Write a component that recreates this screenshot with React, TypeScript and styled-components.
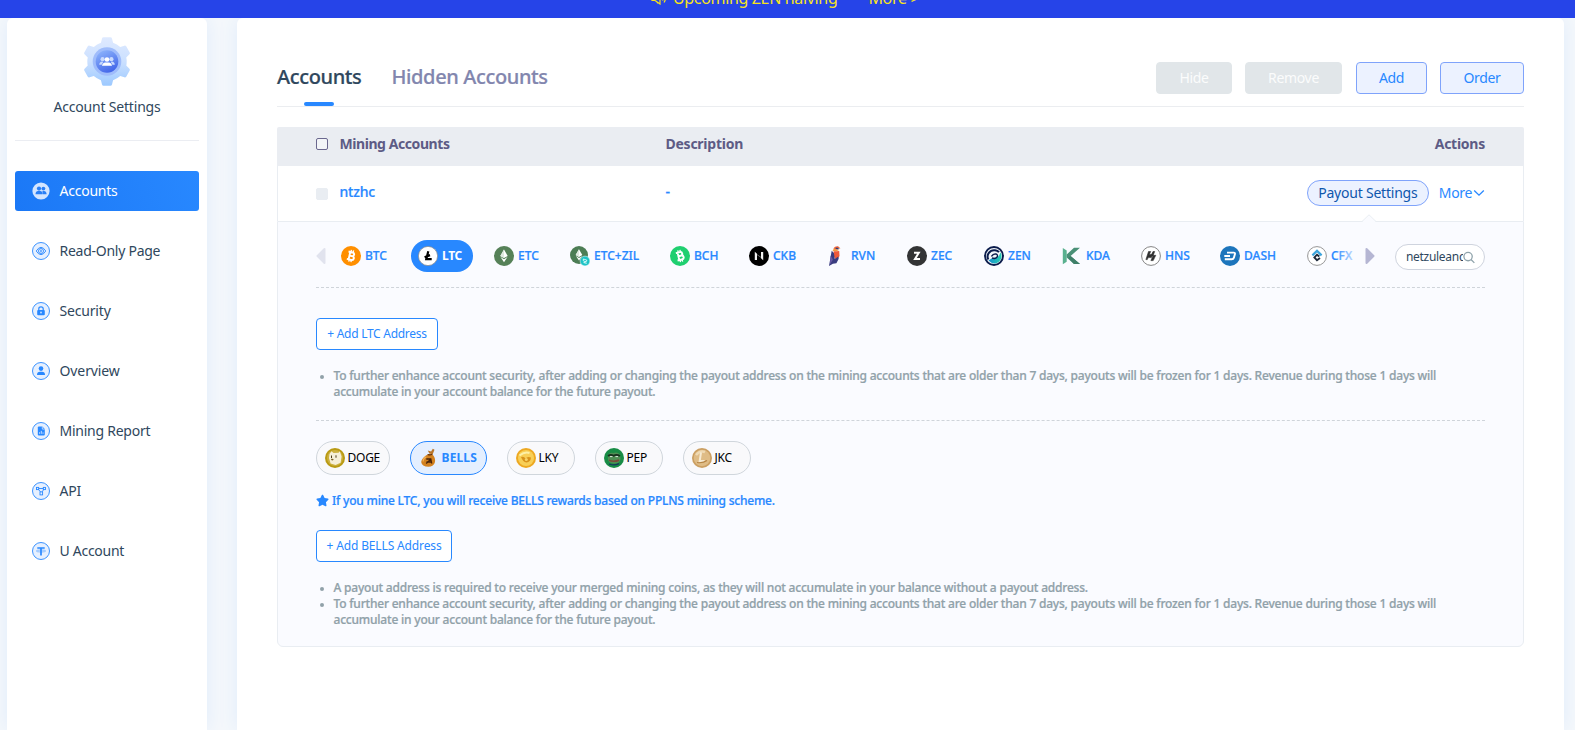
import React from "react";
import styled, { createGlobalStyle, css } from "styled-components";
import { FaStar } from "react-icons/fa";

const blue = "#2888ff";

const GlobalStyle = createGlobalStyle`
  * { box-sizing: border-box; }
  html, body { margin: 0; padding: 0; }
  body {
    font-family: "Noto Sans", "Open Sans", sans-serif;
    font-size: 14px;
    color: #2f475d;
    background: #f5f8fb;
    overflow: hidden;
  }
  button, input { font-family: inherit; }
`;

const mediumText = css`
  font-weight: 500;
  -webkit-text-stroke: 0.22px currentColor;
`;

const Page = styled.div`
  height: 730px;
  display: flex;
  flex-direction: column;
  overflow: hidden;
`;

const Banner = styled.div`
  flex: none;
  height: 18px;
  background: #2644e8;
  overflow: hidden;
  position: relative;
  z-index: 1;
`;

const BannerInner = styled.div`
  height: 40px;
  margin-top: -22px;
  padding-left: 651px;
  display: flex;
  align-items: center;
  color: #f6e31c;
  font-size: 16px;
  white-space: nowrap;
  letter-spacing: -0.34px;
  svg { margin-right: 7px; }
`;

const BannerMore = styled.span`
  margin-left: 31px;
`;

const Body = styled.div`
  flex: 1;
  display: flex;
  align-items: stretch;
  gap: 30px;
  padding: 0 11px 0 7px;
`;

const cardStyle = css`
  background: #fff;
  border-radius: 6px 6px 0 0;
  box-shadow: 0 0 20px rgba(40, 128, 255, 0.1);
`;

const Sidebar = styled.aside`
  ${cardStyle}
  width: 200px;
  flex: none;
  padding: 0 8px;
`;

const Profile = styled.div`
  height: 123px;
  border-bottom: 1px solid #ebedf2;
  padding-top: 19px;
  display: flex;
  flex-direction: column;
  align-items: center;
`;

const ProfileName = styled.div`
  margin-top: 11px;
  line-height: 20px;
  letter-spacing: -0.19px;
`;

const Nav = styled.nav`
  margin-top: 30px;
  display: flex;
  flex-direction: column;
  gap: 20px;
`;

const NavItem = styled.a<{ $active?: boolean; $ls: number }>`
  height: 40px;
  border-radius: 3px;
  padding-left: 17px;
  display: flex;
  align-items: center;
  gap: 9.5px;
  letter-spacing: ${(p) => p.$ls}px;
  color: ${(p) => (p.$active ? "#fff" : "#2f475d")};
  background: ${(p) => (p.$active ? "linear-gradient(70deg, #1b78f6, #2888ff)" : "transparent")};
  svg { flex: none; }
`;

const Label = styled.span`
  margin-top: -2px;
`;

const Main = styled.main`
  ${cardStyle}
  flex: 1;
  padding: 0 40px;
`;

const Toolbar = styled.div`
  height: 89px;
  border-bottom: 1px solid #ebedf0;
  display: flex;
  justify-content: space-between;
`;

const Tabs = styled.div`
  display: flex;
  gap: 30px;
`;

const Tab = styled.div<{ $active?: boolean }>`
  ${mediumText}
  height: 88px;
  padding-top: 44px;
  line-height: 30px;
  font-size: 20px;
  letter-spacing: -0.37px;
  color: ${(p) => (p.$active ? "#2f475d" : "#8286ae")};
  display: flex;
  flex-direction: column;
  align-items: center;
  justify-content: space-between;
  &::after {
    content: "";
    width: 30px;
    height: 4px;
    border-radius: 2px;
    background: ${(p) => (p.$active ? blue : "transparent")};
  }
`;

const Buttons = styled.div`
  display: flex;
  gap: 13px;
  padding-top: 44px;
`;

const ActionButton = styled.button<{ $w: number; $disabled?: boolean }>`
  width: ${(p) => p.$w}px;
  height: 32px;
  padding: 0 0 2px;
  border-radius: 4px;
  font-size: 14px;
  letter-spacing: -0.32px;
  border: 1px solid ${(p) => (p.$disabled ? "#e1e6e9" : "#7fa3fb")};
  background: ${(p) => (p.$disabled ? "#e1e6e9" : "#ecf2ff")};
  color: ${(p) => (p.$disabled ? "#fbfcfc" : blue)};
`;

const Spacer = styled.span`
  width: 1px;
  margin-right: -13px;
`;

const Table = styled.section`
  margin-top: 20px;
`;

const HeadRow = styled.div`
  height: 39px;
  padding: 0 39px 5px;
  display: flex;
  align-items: center;
  background: #eaedf2;
  color: #5d5b85;
  font-weight: 700;
  border-radius: 2px 2px 0 0;
`;

const CheckBox = styled.span<{ $disabled?: boolean }>`
  width: 12px;
  height: 12px;
  margin: ${(p) => (p.$disabled ? 4 : 0)}px 11.5px 0 0;
  border-radius: 2px;
  border: 1px solid ${(p) => (p.$disabled ? "#e9edf2" : "#6b688f")};
  background: ${(p) => (p.$disabled ? "#e9edf2" : "#f3f5f8")};
`;

const Cell = styled.span<{ $w?: number; $ls?: number }>`
  ${(p) => (p.$w ? `width: ${p.$w}px;` : "margin-left: auto;")}
  margin-top: -2px;
  letter-spacing: ${(p) => p.$ls ?? -0.25}px;
`;

const AccountRow = styled.div`
  ${mediumText}
  height: 55px;
  padding: 0 38px 3px;
  display: flex;
  align-items: center;
  border: 1px solid #e9edf2;
  border-width: 0 1px;
  color: ${blue};
`;

const RowActions = styled.div`
  margin: 2px 0 0 auto;
  display: flex;
  align-items: center;
  font-weight: 400;
  -webkit-text-stroke: 0;
`;

const PayoutPill = styled.button`
  width: 122px;
  height: 26px;
  padding: 0 0 2px;
  margin-right: 10px;
  border: 1px solid #7fa3fb;
  border-radius: 13px;
  background: #ecf2ff;
  color: #0f57ad;
  font-size: 14px;
  letter-spacing: -0.22px;
`;

const MoreLink = styled.span`
  display: flex;
  align-items: center;
  gap: 1px;
  letter-spacing: -0.35px;
`;

const Panel = styled.div`
  position: relative;
  background: #fafbff;
  border: 1px solid #e9edf2;
  border-radius: 0 0 6px 6px;
  padding: 18px 38px 18px;
`;

const Caret = styled.svg`
  position: absolute;
  top: -8px;
  right: 147px;
`;

const Carousel = styled.div`
  height: 48px;
  padding-bottom: 15px;
  border-bottom: 1px dashed #cfd4da;
  display: flex;
  align-items: center;
`;

const CoinTrack = styled.div`
  position: relative;
  width: 1021px;
  margin: 0 10px 0 8px;
  display: flex;
  gap: 14px;
  overflow: hidden;
  &::after {
    content: "";
    position: absolute;
    inset: 0 0 0 auto;
    width: 20px;
    background: linear-gradient(90deg, rgba(250, 251, 255, 0), rgba(250, 251, 255, 0.75));
  }
`;

const Coin = styled.div<{ $w: number; $active?: boolean }>`
  ${mediumText}
  flex: none;
  width: ${(p) => p.$w}px;
  height: 32px;
  padding-left: 7px;
  border-radius: 16px;
  display: flex;
  align-items: center;
  gap: 4px;
  font-size: 12px;
  letter-spacing: 0;
  color: ${(p) => (p.$active ? "#fff" : blue)};
  background: ${(p) => (p.$active ? blue : "transparent")};
  svg { flex: none; }
  ${(p) => p.$active && "font-weight: 700; letter-spacing: -0.3px; -webkit-text-stroke: 0;"}
`;

const SearchBox = styled.label`
  width: 90px;
  height: 26px;
  margin: 2px 0 0 auto;
  padding: 0 9px 0 10px;
  border: 1px solid #cfd4de;
  border-radius: 13px;
  background: #fff;
  display: flex;
  align-items: center;
`;

const SearchInput = styled.input`
  width: 57px;
  flex: none;
  padding: 0;
  margin-top: -1px;
  border: 0;
  outline: 0;
  background: transparent;
  font-size: 12px;
  letter-spacing: -0.3px;
  color: #2f475d;
`;

const AddButton = styled.button<{ $w: number; $top: number; $ls: number }>`
  display: block;
  width: ${(p) => p.$w}px;
  height: 32px;
  margin-top: ${(p) => p.$top}px;
  padding: 0 0 2px;
  border: 1px solid ${blue};
  border-radius: 4px;
  background: #fff;
  color: ${blue};
  font-size: 12px;
  letter-spacing: ${(p) => p.$ls}px;
`;

const Notes = styled.ul`
  ${mediumText}
  margin: 18px 0 0;
  padding: 0 0 0 17.5px;
  list-style: none;
  font-size: 12px;
  line-height: 16px;
  letter-spacing: -0.207px;
  color: #90a1a9;
  li { position: relative; }
  li::before {
    content: "";
    position: absolute;
    left: -13.500px;
    top: 7px;
    width: 4px;
    height: 4px;
    border-radius: 50%;
    background: #90a1a9;
  }
`;

const MergedCoins = styled.div`
  margin-top: 20px;
  padding-top: 20px;
  border-top: 1px dashed #cfd4da;
  display: flex;
  gap: 20px;
`;

const MergedCoin = styled.div<{ $w: number; $active?: boolean }>`
  width: ${(p) => p.$w}px;
  height: 34px;
  padding-left: 8px;
  display: flex;
  align-items: center;
  gap: 2.5px;
  border-radius: 17px;
  border: 1px solid ${(p) => (p.$active ? blue : "#d0d6dc")};
  background: ${(p) => (p.$active ? "#e4efff" : "#f9f9fb")};
  color: ${(p) => (p.$active ? blue : "#000")};
  font-size: 12px;
  font-weight: ${(p) => (p.$active ? 700 : 400)};
  letter-spacing: ${(p) => (p.$active ? 0.15 : -0.25)}px;
`;

const Hint = styled.div`
  ${mediumText}
  margin-top: 17px;
  height: 17px;
  display: flex;
  align-items: center;
  gap: 3px;
  font-size: 12px;
  letter-spacing: -0.207px;
  color: ${blue};
`;

const GearLogo = () => (
  <svg width="48" height="49" viewBox="-24 -24.5 48 49">
    <defs>
      <linearGradient id="gear" x1="0" y1="0" x2="0" y2="1">
        <stop offset="0" stopColor="#dfeaff" />
        <stop offset=".5" stopColor="#cbe0ff" />
        <stop offset="1" stopColor="#9cc9ff" />
      </linearGradient>
      <linearGradient id="core" x1=".2" y1="0" x2=".7" y2="1">
        <stop offset="0" stopColor="#8db4fc" />
        <stop offset="1" stopColor="#4063e8" />
      </linearGradient>
      <clipPath id="gearShape">
        <circle r="19.7" />
        {[0, 60, 120].map((a) => (
          <path key={a} transform={`rotate(${a})`} d="M-5 -23q.4-1.200 1.500-1.200h7q1.100 0 1.500 1.200l2 8v30l-2 8q-.4 1.200-1.500 1.200h-7q-1.100 0-1.500-1.200l-2-8v-30z" />
        ))}
      </clipPath>
    </defs>
    <rect x="-24" y="-24.5" width="48" height="49" fill="url(#gear)" clipPath="url(#gearShape)" />
    <circle r="14.3" fill="#9fbcfb" />
    <circle r="11.3" fill="url(#core)" />
    <g fill="#c9dafe">
      <circle cx="-4.4" cy="-2.3" r="2.1" />
      <circle cx="4.4" cy="-2.3" r="2.1" />
      <path d="M-7.800 3.300q.3-3 3-3.200l1 .3-1.600 2.900zM7.800 3.300q-.3-3-3-3.200l-1 .3 1.600 2.900z" />
    </g>
    <g fill="#fff">
      <circle cy="-2" r="2.3" />
      <path d="M-5 4.300q.4-3 3.400-3.300h3.200q3 .3 3.400 3.300z" />
    </g>
  </svg>
);

const navGlyphs: Record<string, React.ReactNode> = {
  eye: (
    <g fill="none" stroke={blue} strokeWidth=".9">
      <path d="M4.200 9q4.800-7.400 9.600 0q-4.800 7.400-9.600 0z" />
      <circle cx="9" cy="9" r="2.500" />
      <path d="M9 7.700v2.600" strokeWidth="1.200" />
    </g>
  ),
  lock: (
    <g>
      <path d="M6.800 8.500V6.800q0-2 2.200-2t2.200 2v1.700" fill="none" stroke={blue} strokeWidth="1.200" />
      <rect x="5.200" y="7.900" width="7.600" height="5.300" rx="1" fill={blue} />
      <circle cx="9" cy="10.500" r=".9" fill="#cfe3ff" />
    </g>
  ),
  user: (
    <g fill={blue}>
      <circle cx="9" cy="6.600" r="2.300" />
      <path d="M5 13q0-3.300 3-3.300h2q3 0 3 3.300z" />
    </g>
  ),
  report: (
    <g>
      <path d="M6.800 4.600h3.600l2.400 2.400v5.400q0 1-1 1H6.800q-1 0-1-1V5.600q0-1 1-1z" fill={blue} />
      <path d="M10.300 4.600v2.500h2.500" fill="none" stroke="#e6f0ff" strokeWidth=".7" />
      <path d="M7.600 11.800v-1.600M9.300 11.800V8.900M11 11.800v-1.400" stroke="#e6f0ff" strokeWidth=".8" />
    </g>
  ),
  api: (
    <g fill="none" stroke={blue} strokeWidth=".9">
      <rect x="4.500" y="5.400" width="2.200" height="2.200" />
      <rect x="11.300" y="5.400" width="2.200" height="2.200" />
      <rect x="8" y="9.900" width="2.600" height="3" />
      <path d="M6.700 6.500h4.600M6.500 7.600L8.600 9.900M11.700 7.600L10 9.900" />
    </g>
  ),
  tether: (
    <g stroke={blue} fill="none">
      <path d="M5.300 6h7.400M9 6v7.500" strokeWidth="1.700" />
      <ellipse cx="9" cy="9" rx="4.600" ry="1" strokeWidth=".5" />
    </g>
  ),
};

const NavIcon = ({ name }: { name: string }) =>
  name === "users" ? (
    <svg width="18" height="18" viewBox="0 0 18 18">
      <circle cx="9" cy="9" r="8.600" fill="#d3e5ff" />
      <g fill="#2a7ff5">
        <circle cx="7" cy="6.600" r="2.100" />
        <circle cx="11.400" cy="6.600" r="1.900" />
        <path d="M3.500 12.200q0-3 2.500-3.300h2.200q2.500.3 2.500 3.300zM11 12.200h3.600q0-3-2.600-3.300h-1.600z" />
      </g>
    </svg>
  ) : (
    <svg width="18" height="18" viewBox="0 0 18 18">
      <circle cx="9" cy="9" r="8.500" fill="#e6f0ff" stroke={blue} strokeWidth=".9" />
      {navGlyphs[name]}
    </svg>
  );

const Diamond = () => (
  <>
    <path d="M10 3.600l3.700 6.300L10 12.100 6.300 9.900z" fill="#fff" />
    <path d="M10 3.600v8.500L6.300 9.900z" fill="#dfe9df" />
    <path d="M6.500 11.100L10 13.200l3.500-2.100L10 16.200z" fill="#fff" />
  </>
);

const BitcoinMark = ({ tilt }: { tilt: number }) => (
  <g transform={`rotate(${tilt} 10 10)`} fill="none" stroke="#fff">
    <path d="M6.600 6.200h4.100q2 0 2 1.850t-2 1.850H8.500M8.500 9.900h2.600q2.200 0 2.200 1.950t-2.200 1.950H6.600M8.400 6.200v7.600" strokeWidth="1.900" />
    <path d="M9.100 4v2M11.300 4v2M9.100 14v2M11.300 14v2" strokeWidth="1.300" />
  </g>
);

const coinArt: Record<string, React.ReactNode> = {
  BTC: <><circle cx="10" cy="10" r="10" fill="#ff8f00" /><BitcoinMark tilt={13} /></>,
  LTC: (
    <>
      <circle cx="10" cy="10" r="9.600" fill="#fff" stroke="#8b8f96" strokeWidth=".8" />
      <path d="M10.300 5.200L8.300 13.200h5.400M6.600 11.200l5.400-2.100" fill="none" stroke="#000" strokeWidth="2.200" />
    </>
  ),
  ETC: <><circle cx="10" cy="10" r="10" fill="#568158" /><Diamond /></>,
  "ETC+ZIL": (
    <>
      <g transform="scale(.9)"><circle cx="10" cy="10" r="10" fill="#4c7d55" /><Diamond /></g>
      <circle cx="15" cy="15" r="4.900" fill="#1cc3c6" stroke="#fafbff" strokeWidth=".5" />
      <path d="M13.200 13l3.500 1v1.200l-3 1.400 3 .8M13.300 13v1.800l3 1.300" fill="none" stroke="#eaffff" strokeWidth=".8" />
    </>
  ),
  BCH: <><circle cx="10" cy="10" r="10" fill="#1fcf70" /><BitcoinMark tilt={-13} /></>,
  CKB: <><circle cx="10" cy="10" r="10" fill="#000" /><path d="M5.800 14V5.800l2.200 2V14zM12 6h2.200v8.200l-2.200-2z" fill="#f2f2f2" /><path d="M8 8.600l4 2.800" stroke="#666" /></>,
  RVN: (
    <>
      <path d="M6.300 2.600Q8 0 11 .3l2.400 2-4 1.400z" fill="#e9633c" />
      <path d="M9.500 1.500l3.300.9-1.600 1.100-2.800-.4z" fill="#353a7a" />
      <path d="M11.500 2l1.900.5-1.600 1z" fill="#f8cf9a" />
      <path d="M5.500 4.600l1.700-2.200 4.600 1.800-4 1.600z" fill="#f39a3f" />
      <path d="M6.500 5.500l5.700-.6.3 5.200-3 4.600-2.400-4z" fill="#f0593a" />
      <path d="M4.700 4.800l2.200 2.300.9 6 3.500-2.600.4 2.300-2.300 4.400-3.500.5L2 20z" fill="#3a3c80" />
      <path d="M3.500 9.500l2.400 4-2.900 5z" fill="#6a5aa6" />
    </>
  ),
  ZEC: (
    <>
      <circle cx="10" cy="10" r="10" fill="#333435" />
      <path d="M7 6.800h4.800L8 12.900h5" fill="none" stroke="#fff" strokeWidth="2" />
    </>
  ),
  ZEN: (
    <>
      <defs><linearGradient id="zen" x1="0" y1="0" x2="1" y2="0"><stop offset="0" stopColor="#148fd0" /><stop offset="1" stopColor="#28d0b0" /></linearGradient></defs>
      <circle cx="10" cy="10" r="9" fill="#f3f7fb" stroke="#0b1c4c" strokeWidth="1.900" />
      <path d="M4.300 13.500A6.500 6.500 0 0 1 11 4.200q2.600.3 4 2" fill="none" stroke="#0b1c4c" strokeWidth="2" />
      <path d="M4.500 14.500q3.500-3 7.300-3 3.500-.3 4.700-5.300 2.600 5-1.200 9.200-5.300 4.600-10.800-.9z" fill="url(#zen)" />
      <path d="M8 12q3.500 1.200 5-.8 1.300-2.500-1-3.200-3-.5-4.500 2.500" fill="none" stroke="#0b1c4c" strokeWidth="1.400" />
    </>
  ),
  KDA: (
    <>
      <path d="M.8 2l3.900 2.500v11.300L.8 18.200z" fill="#59b18f" />
      <path d="M4.700 8.500L12 1.800h6L8.600 10l9.400 8h-6l-7.300-6.600z" fill="#4a9077" />
      <path d="M12 18h6L8.600 10l-2.200 1.900z" fill="#3f7f69" />
    </>
  ),
  HNS: (
    <>
      <circle cx="10" cy="10" r="9.400" fill="#fff" stroke="#777" strokeWidth=".9" />
      <g fill="#303030" stroke="#303030" strokeWidth=".6" strokeLinejoin="round">
        <path d="M7.500 5.500h2.200L8.400 8.600h3.200l-1.200 3H7.200l-.9 2H4.900z" />
        <path d="M12 5.500h1.700l-1.500 3.800h2.600l-2.600 5.300h-2.300l2-4.600H9.800z" />
      </g>
    </>
  ),
  DASH: (
    <>
      <circle cx="10" cy="10" r="10" fill="#1c75bc" />
      <path d="M7 6.600h6.700q1.700 0 1.200 1.700l-1 3.300q-.5 1.700-2.200 1.700H4.800M4.300 10H10" fill="none" stroke="#fff" strokeWidth="1.900" />
    </>
  ),
  CFX: (
    <>
      <circle cx="10" cy="10" r="9.400" fill="#fff" stroke="#8b8b8b" strokeWidth=".9" />
      <path d="M5.400 9.400L10 4.900l4.600 4.500" fill="none" stroke="#3da4dc" strokeWidth="2.200" />
      <path d="M12.300 10.600L10 8.700 7.400 11.400 10 14.300l3-2.200" fill="none" stroke="#1f2a3a" strokeWidth="1.900" />
    </>
  ),
  DOGE: (
    <>
      <circle cx="10" cy="10" r="10" fill="#b99a13" />
      <circle cx="10" cy="10" r="8" fill="#cdb13f" />
      <path d="M4.500 6l2-2.700L8.600 5l5-.3 1.200-1.500 1.800 5.300-1 6.300-5 2.200-5-1.600L4 10z" fill="#f6efd8" />
      <path d="M6.500 7.500v2.600M11 7.300v2.400" stroke="#4b3a16" strokeWidth="1" />
      <ellipse cx="7.300" cy="11.600" rx="1.300" ry=".8" fill="#7a6026" />
    </>
  ),
  BELLS: (
    <>
      <path d="M10.300 5.500L8.800 2.600l3.300 1L13.800.8l1.700 1-1.800 4.400z" fill="#b8752a" />
      <path d="M9 6.200q3.500-1.300 4.800.6 3.300 4 1.900 8.200-1.500 3.700-6.200 3.700-6.700 0-7.300-4.700Q2.600 9.800 9 6.200z" fill="#d2811f" />
      <path d="M4.200 13.500q-.2-3.300 3-4.700" fill="none" stroke="#f0ad50" strokeWidth="1.300" />
      <path d="M8.700 6.500q2.500 1 4.600-.2" stroke="#64330c" strokeWidth="1.200" fill="none" />
      <path d="M7.300 11l4.500-.2.900 4.700M12 11l-4.800 4.400M7.500 13.800l4.900.2" stroke="#47230a" strokeWidth="1.300" fill="none" />
    </>
  ),
  LKY: (
    <>
      <circle cx="10" cy="10" r="10" fill="#eda821" />
      <circle cx="10" cy="10" r="8" fill="#f8cf57" />
      <path d="M3.500 7.500q5-4 10-2.500" stroke="#fdf0a6" strokeWidth="2" fill="none" />
      <path d="M5 9q3-1 4.500 1.500 2-2.500 5.500-1-.5 4.500-4.500 5-3.500-.5-5.500-5.500z" fill="#d8931b" />
      <circle cx="10.300" cy="11.400" r="1.500" fill="#f7d468" />
    </>
  ),
  PEP: (
    <>
      <circle cx="10" cy="10" r="10" fill="#188c45" />
      <path d="M4 8q1.500-4.500 5.500-3 5-1.500 6.500 2.500 1.800 5.500-2 7.500-5.500 2-9-1-2-2.500-1-6z" fill="#4f8f54" />
      <path d="M4 8q2.800-2 5.500-.2 3-1.800 6.500.2" stroke="#16301d" strokeWidth="1.700" fill="none" />
      <path d="M6 8.600h2.500M11.500 8.600H14" stroke="#eef3ec" strokeWidth=".9" />
      <path d="M5 12.300q5 2 10-.2" stroke="#7a4a3a" strokeWidth="1.700" fill="none" />
      <path d="M5 16q5 2 10-.3" stroke="#17355f" strokeWidth="1.300" fill="none" />
    </>
  ),
  JKC: (
    <>
      <circle cx="10" cy="10" r="10" fill="#cb9f62" />
      <circle cx="10" cy="10" r="8.300" fill="#dfbc86" />
      <path d="M4 7q4-5 9-3" stroke="#efdab4" strokeWidth="2.500" fill="none" />
      <path d="M9 4.500l-1.300 8.500h5" fill="none" stroke="#f6ead2" strokeWidth="2" />
      <path d="M5 14.500q5.500 1 10-2" stroke="#b58445" strokeWidth="1.200" fill="none" />
    </>
  ),
};

const CoinIcon = ({ name }: { name: string }) => (
  <svg width="20" height="20" viewBox="0 0 20 20">{coinArt[name]}</svg>
);

const Arrow = ({ flip, color }: { flip?: boolean; color: string }) => (
  <svg width="10" height="18" viewBox="0 0 10 18">
    <path
      d="M1.500 2v14L8.500 9z"
      transform={flip ? "matrix(-1 0 0 1 10 0)" : undefined}
      fill={color}
      stroke={color}
      strokeWidth="2"
      strokeLinejoin="round"
    />
  </svg>
);

const nav = [
  { icon: "users", label: "Accounts", ls: -0.24 },
  { icon: "eye", label: "Read-Only Page", ls: -0.26 },
  { icon: "lock", label: "Security", ls: -0.18 },
  { icon: "user", label: "Overview", ls: -0.1 },
  { icon: "report", label: "Mining Report", ls: -0.25 },
  { icon: "api", label: "API", ls: -0.2 },
  { icon: "tether", label: "U Account", ls: -0.28 },
];

const coins: [string, number][] = [
  ["BTC", 63], ["LTC", 62], ["ETC", 62], ["ETC+ZIL", 86], ["BCH", 65], ["CKB", 64], ["RVN", 66],
  ["ZEC", 63], ["ZEN", 64], ["KDA", 65], ["HNS", 65], ["DASH", 73], ["CFX", 62],
];

const merged: [string, number][] = [["DOGE", 74], ["BELLS", 77], ["LKY", 68], ["PEP", 68], ["JKC", 68]];

const freezeNote =
  "To further enhance account security, after adding or changing the payout address on the mining accounts that are older than 7 days, payouts will be frozen for 1 days. Revenue during those 1 days will accumulate in your account balance for the future payout.";

export default function App() {
  return (
    <Page>
      <GlobalStyle />
      <Banner>
        <BannerInner>
          <svg width="15" height="14" viewBox="0 0 15 14" fill="none" stroke="#f6e31c" strokeWidth="1.200">
            <path d="M1 4.500h3L9 1v12L4 9.500H1zM5 10l2 2.500M11.500 4.500q1.500 2.500 0 5M13 2.500q3 4.500 0 9" />
          </svg>
          Upcoming ZEN halving
          <BannerMore>More &gt;</BannerMore>
        </BannerInner>
      </Banner>
      <Body>
        <Sidebar>
          <Profile>
            <GearLogo />
            <ProfileName>Account Settings</ProfileName>
          </Profile>
          <Nav>
            {nav.map((n, i) => (
              <NavItem key={n.label} $active={i === 0} $ls={n.ls}>
                <NavIcon name={n.icon} />
                <Label>{n.label}</Label>
              </NavItem>
            ))}
          </Nav>
        </Sidebar>
        <Main>
          <Toolbar>
            <Tabs>
              <Tab $active>Accounts</Tab>
              <Tab>Hidden Accounts</Tab>
            </Tabs>
            <Buttons>
              <ActionButton $w={76} $disabled>Hide</ActionButton>
              <ActionButton $w={97} $disabled>Remove</ActionButton>
              <Spacer />
              <ActionButton $w={71}>Add</ActionButton>
              <ActionButton $w={84}>Order</ActionButton>
            </Buttons>
          </Toolbar>
          <Table>
            <HeadRow>
              <CheckBox />
              <Cell $w={326} $ls={-0.43}>Mining Accounts</Cell>
              <Cell $w={200}>Description</Cell>
              <Cell $ls={-0.25}>Actions</Cell>
            </HeadRow>
            <AccountRow>
              <CheckBox $disabled />
              <Cell $w={326} $ls={-0.2}>ntzhc</Cell>
              <Cell $w={200}>-</Cell>
              <RowActions>
                <PayoutPill>Payout Settings</PayoutPill>
                <MoreLink>
                  <Label>More</Label>
                  <svg width="12" height="8" viewBox="0 0 12 8">
                    <path d="M1.200 1.500L6 6.200l4.800-4.700" fill="none" stroke={blue} strokeWidth="1.300" />
                  </svg>
                </MoreLink>
              </RowActions>
            </AccountRow>
            <Panel>
              <Caret width="14" height="9" viewBox="0 0 14 9">
                <path d="M0 8L7 1l7 7v1H0z" fill="#fafbff" />
                <path d="M0 7.500L7 .8l7 6.700" fill="none" stroke="#e9edf2" />
              </Caret>
              <Carousel>
                <Arrow flip color="#e1e3ee" />
                <CoinTrack>
                  {coins.map(([name, w]) => (
                    <Coin key={name} $w={w} $active={name === "LTC"}>
                      <CoinIcon name={name} />
                      <Label>{name}</Label>
                    </Coin>
                  ))}
                </CoinTrack>
                <Arrow color="#b5b6d3" />
                <SearchBox>
                  <SearchInput defaultValue="netzuleandro" />
                  <svg width="13" height="13" viewBox="0 0 13 13" fill="none" stroke="#8fa3ab" strokeWidth="1.400">
                    <circle cx="5.500" cy="5.500" r="4.500" />
                    <path d="M8.700 8.700l3.600 3.600" />
                  </svg>
                </SearchBox>
              </Carousel>
              <AddButton $w={122} $top={30} $ls={-0.27}>+ Add LTC Address</AddButton>
              <Notes>
                <li>{freezeNote}</li>
              </Notes>
              <MergedCoins>
                {merged.map(([name, w]) => (
                  <MergedCoin key={name} $w={w} $active={name === "BELLS"}>
                    <CoinIcon name={name} />
                    <Label>{name}</Label>
                  </MergedCoin>
                ))}
              </MergedCoins>
              <Hint>
                <FaStar size={13} />
                If you mine LTC, you will receive BELLS rewards based on PPLNS mining scheme.
              </Hint>
              <AddButton $w={136} $top={21} $ls={-0.14}>+ Add BELLS Address</AddButton>
              <Notes>
                <li>A payout address is required to receive your merged mining coins, as they will not accumulate in your balance without a payout address.</li>
                <li>{freezeNote}</li>
              </Notes>
            </Panel>
          </Table>
        </Main>
      </Body>
    </Page>
  );
}
